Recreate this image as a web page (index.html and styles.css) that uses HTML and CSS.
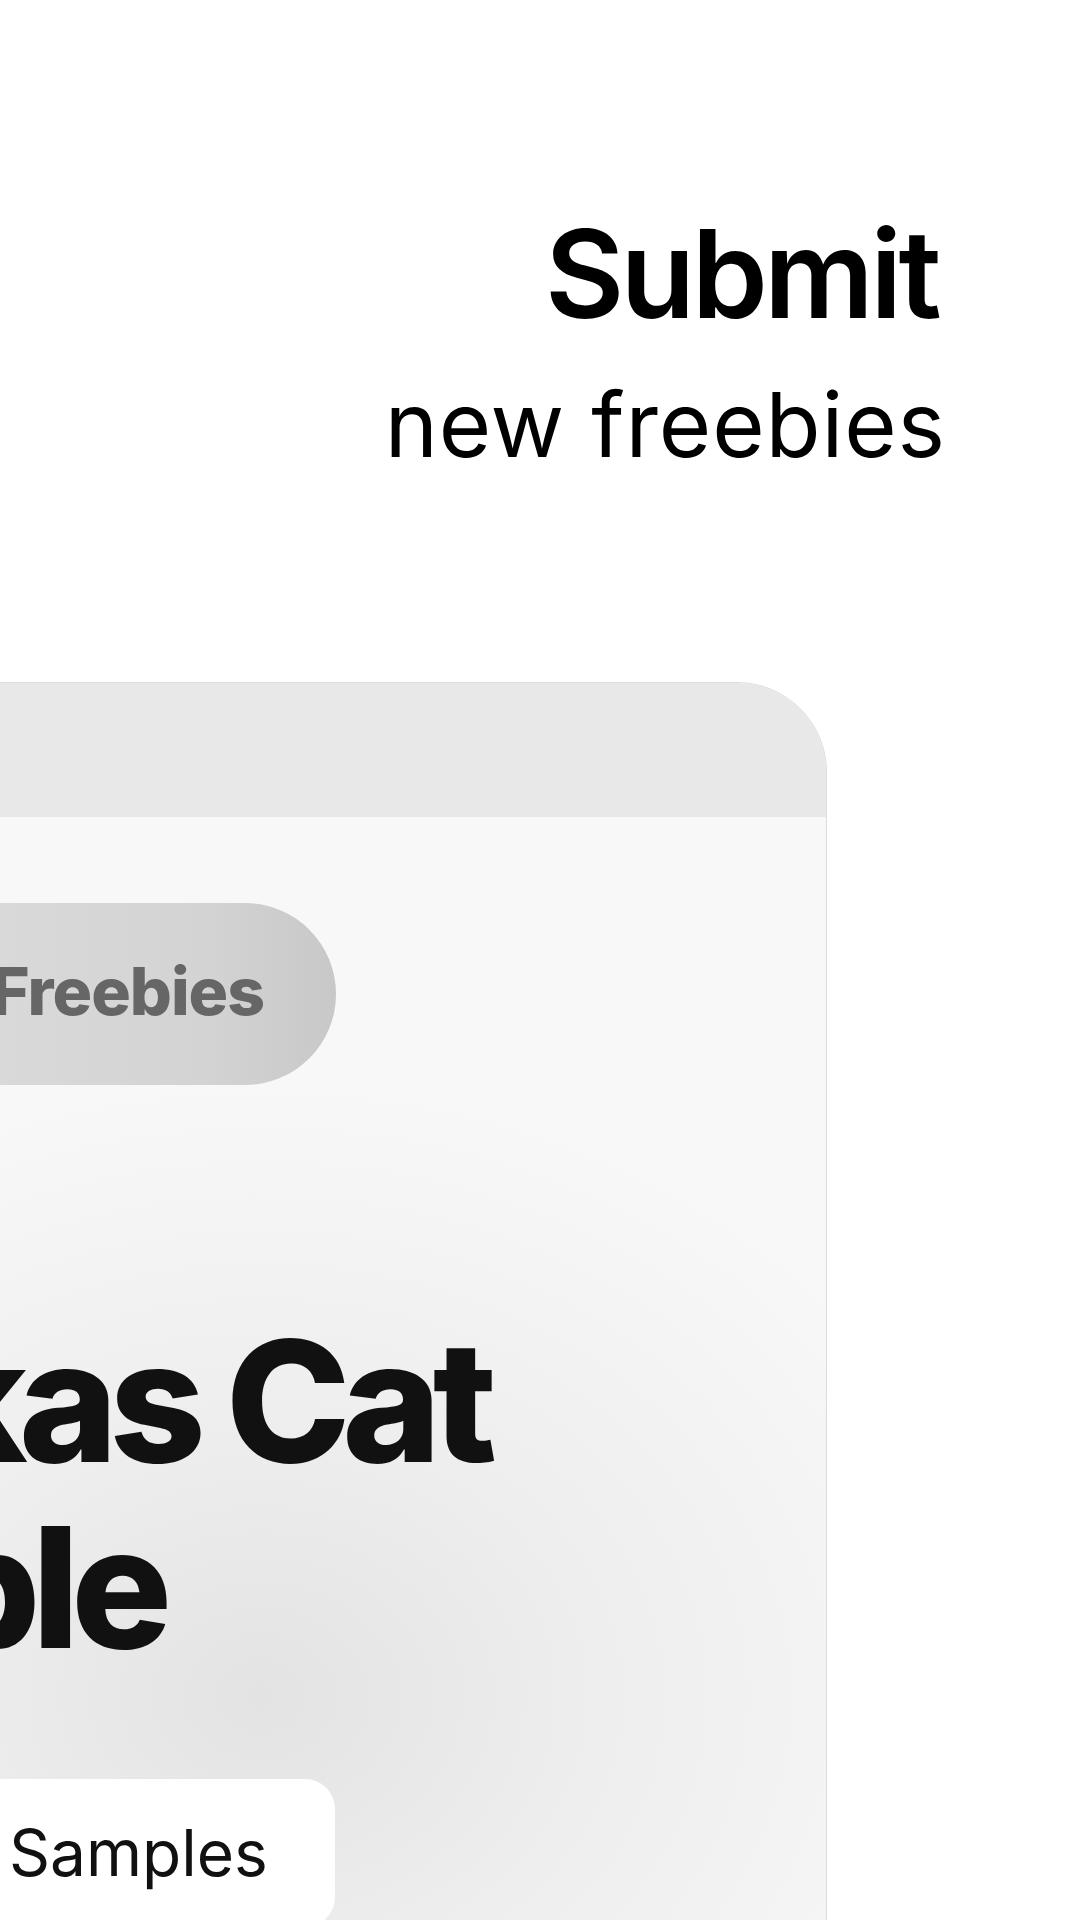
FILE: index.html
```html
<!DOCTYPE html>
<html lang="en">
<head>
<meta charset="utf-8">
<title>Submit new freebies</title>
<link rel="stylesheet" href="styles.css">
</head>
<body>
<main class="page">
  <header class="hero">
    <h1 class="hero-title">Submit</h1>
    <p class="hero-sub">new freebies</p>
  </header>
  <section class="card">
    <div class="card-bar"></div>
    <div class="card-body">
      <span class="pill">Freebies</span>
      <h2 class="title">Whiskas Cat<br>Sample</h2>
      <div class="tags"><span class="tag">Samples</span></div>
    </div>
  </section>
</main>
</body>
</html>
```

FILE: styles.css
```css
* { box-sizing: border-box; }
html, body {
  margin: 0;
  padding: 0;
  background: #ffffff;
  overflow: hidden;
}
body {
  width: 1080px;
  height: 1920px;
  font-family: Inter, "Noto Sans", "Liberation Sans", sans-serif;
  color: #000;
}
.page {
  display: flex;
  flex-direction: column;
}
.hero {
  display: flex;
  flex-direction: column;
  align-items: flex-end;
  padding: 202px 142px 0 0;
}
.hero-title {
  margin: 0;
  font-size: 122px;
  font-weight: 600;
  line-height: 144px;
  letter-spacing: -0.03em;
}
.hero-sub {
  margin: 19px -8px 0 0;
  font-size: 90px;
  font-weight: 400;
  line-height: 120px;
  letter-spacing: 0.01em;
}
.card {
  margin: 197px 0 0 -560px;
  width: 1387px;
  height: 1300px;
  border: 1.5px solid #dcdcdc;
  border-radius: 0 90px 0 0;
  overflow: hidden;
  display: flex;
  flex-direction: column;
  flex-shrink: 0;
}
.card-bar {
  height: 134px;
  background: #e8e8e8;
  flex-shrink: 0;
}
.card-body {
  flex: 1;
  padding: 86px 0 0 60px;
  background:
    radial-gradient(ellipse 760px 620px at 820px 880px, #e3e3e3 0%, #eeeeee 45%, #f8f8f8 100%);
  display: flex;
  flex-direction: column;
  align-items: flex-start;
}
.pill {
  display: inline-flex;
  align-items: center;
  height: 182px;
  padding: 0 72px 6px 490px;
  border-radius: 91px;
  background: linear-gradient(to right, #dadada 0%, #d9d9d9 60%, #d3d3d3 85%, #c8c8c8 100%);
  color: #666666;
  font-size: 66px;
  font-weight: 800;
  letter-spacing: -0.015em;
  white-space: nowrap;
}
.title {
  margin: 223px 0 0 0;
  padding-left: 92px;
  text-indent: -60px;
  font-size: 168px;
  font-weight: 800;
  line-height: 186px;
  letter-spacing: -0.05em;
  color: #111111;
  white-space: nowrap;
}
.tags {
  margin-top: 99px;
  display: flex;
}
.tag {
  display: inline-block;
  padding: 36px 67px 36px 508px;
  border-radius: 30px;
  background: #ffffff;
  color: #111111;
  font-size: 64px;
  line-height: 76px;
  font-weight: 400;
  white-space: nowrap;
}
```
